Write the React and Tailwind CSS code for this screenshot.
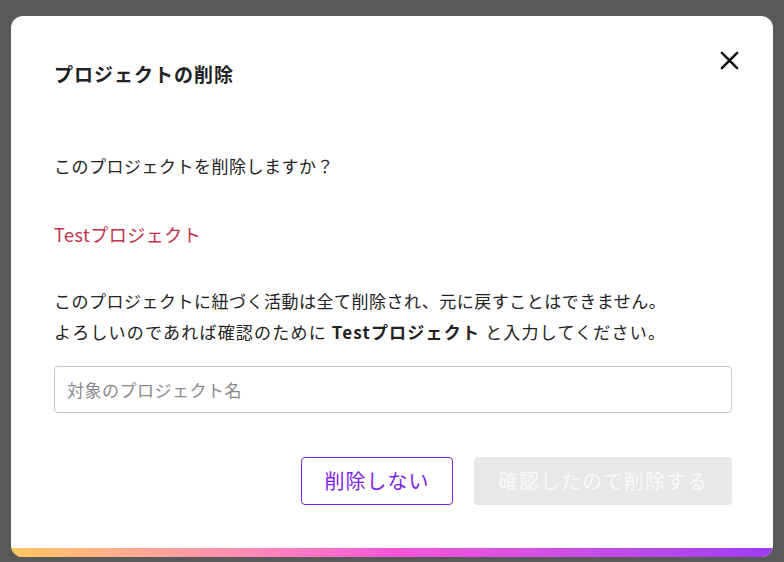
export default function App() {
  return (
    <div
      className="w-[784px] h-[562px] bg-[#595959] pt-4 px-[11px] overflow-hidden"
      style={{ fontFamily: '"Noto Sans CJK JP", "Noto Sans", sans-serif' }}
    >
      <div className="bg-white rounded-[12px] h-[541px] flex flex-col overflow-hidden">
        {/* Header */}
        <div className="flex items-start justify-between pl-[43px] pr-[28px] pt-[28px]">
          <h2 className="mt-[16px] text-[19px] font-bold tracking-[1px] text-[#222] leading-[28px]">プロジェクトの削除</h2>
          <button className="w-8 h-8 flex items-center justify-center text-[#111]">
            <svg width="21" height="21" viewBox="0 0 22 22" fill="none" stroke="currentColor" strokeWidth="2.6" strokeLinecap="round">
              <path d="M3 3 L19 19 M19 3 L3 19" />
            </svg>
          </button>
        </div>

        {/* Body */}
        <div className="flex-1 pl-[43px] pr-[41px] text-[17px] tracking-[0.5px] text-[#222]">
          <p className="mt-[63px] leading-[30px]">このプロジェクトを削除しますか？</p>
          <p className="mt-[38px] leading-[30px] text-[18px] text-[#c4314b]">Testプロジェクト</p>
          <div className="mt-[36px] leading-[31px]">
            <p>このプロジェクトに紐づく活動は全て削除され、元に戻すことはできません。</p>
            <p className="tracking-[1.2px]">
              よろしいのであれば確認のために&nbsp;<span className="font-bold">Testプロジェクト</span>&nbsp;と入力してください。
            </p>
          </div>
          <input
            type="text"
            placeholder="対象のプロジェクト名"
            className="mt-[19px] w-full h-[47px] border border-[#c6c6c6] rounded-[4px] px-3 text-[17px] placeholder:text-[#8a8a8a] outline-none"
          />
          <div className="mt-[44px] flex justify-end gap-[21px]">
            <button className="w-[152px] h-[48px] border border-[#7c22e8] rounded-[4px] text-[20px] tracking-[1px] text-[#7c22e8]">
              削除しない
            </button>
            <button disabled className="w-[258px] h-[48px] bg-[#e8e8e8] rounded-[4px] text-[20px] tracking-[1px] text-[#f9f9f9]">
              確認したので削除する
            </button>
          </div>
        </div>

        {/* Bottom gradient bar */}
        <div className="h-[9px] bg-gradient-to-r from-[#ffc85c] via-[#fa55d8] to-[#9d3cf5]" />
      </div>
    </div>
  )
}
